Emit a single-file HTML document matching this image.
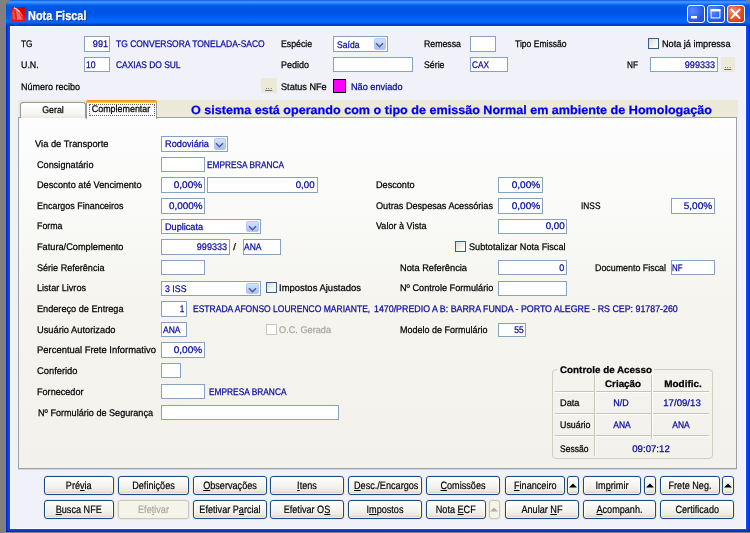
<!DOCTYPE html>
<html lang="pt-BR"><head><meta charset="utf-8"><title>Nota Fiscal</title>
<style>
html,body{margin:0;padding:0}
body{width:750px;height:533px;background:#808080;position:relative;overflow:hidden;font-family:"Liberation Sans",sans-serif;font-size:9.6px;color:#000;text-rendering:geometricPrecision}
div,span,svg{position:absolute;box-sizing:border-box}
.win{left:6px;top:0;width:744px;height:532px;border-radius:7px 7px 0 0;background:linear-gradient(to bottom,rgba(0,0,0,0) 0,rgba(0,0,0,0) 529px,rgba(0,10,120,.55) 532px),linear-gradient(to right,#0020cc 0,#0a40ee 2px,#0c4cf6 4px,#0c4cf6 740px,#0a40ee 742px,#0028d0 744px)}
.tb{left:6px;top:0;width:744px;height:26px;border-radius:7px 7px 0 0;
 background:linear-gradient(to bottom,#0650dc 0,#2b82ff 1px,#4a9aff 2px,#2c86ff 3.2px,#0a68f8 4.6px,#0059e8 6px,#0055e2 9px,#0056e6 14px,#005cf2 17px,#0468fe 20px,#0364f4 22.5px,#004cd8 24px,#003cc0 25.3px,#0038b8 26px)}
.client{left:10px;top:26px;width:736.4px;height:502.5px;background:#f1f2f9;border:1px solid #fff}
.t{white-space:nowrap;line-height:14px;height:14px;-webkit-text-stroke:0.25px currentColor}
.l{color:#000}
.v{color:#0808a0}
.b{font-weight:bold;font-size:9.6px}
.ttl{font-weight:bold;font-size:12.8px;color:#fff;text-shadow:1px 1px 0 #0a2a8a}
.msg{font-weight:bold;font-size:12px;color:#0000f0}
.cap{top:5px;width:17.5px;height:17.5px;border:1px solid #fff;border-radius:3px;background:radial-gradient(circle at 30% 30%,#5a8cfc 0%,#2c5eea 55%,#1c48d2 100%)}
.cap svg{left:-1px;top:-1px}
.cap.close{background:radial-gradient(circle at 30% 30%,#f09070 0%,#e04e26 55%,#c03814 100%)}
.in{background:#fff;border:1px solid #86a2c0}
.dd{right:1px;top:1px;bottom:1px;width:12.5px;border-radius:2px;background:linear-gradient(to bottom,#d6e0fd 0%,#c0d1fb 50%,#a8bdf3 100%);border:1px solid #b5c7f4}
.ch{left:0.8px;top:2.6px}
.cb{border:1px solid #33608c;background:linear-gradient(135deg,#dcdcd7 0%,#f3f3ef 60%,#fff 100%)}
.cb.dis{border-color:#cac8bb;background:#fff}
.dots{background:#ece9d8}
.dots span{color:#6a6a6a;left:0;right:0;bottom:3px;text-align:center;line-height:8px;font-size:8.5px;letter-spacing:0px;text-decoration:underline}
.mag{background:#ff00ff;border:1px solid #000}
.tabbg{background:#ece9d8}
.page{background:linear-gradient(to bottom,#fdfdfe 0%,#fafaf8 25%,#f5f4ef 55%,#f2f1eb 100%);border:1px solid #99a2a5;box-shadow:0 1px 0 rgba(150,158,160,.35)}
.tab{border:1px solid #919b9c;border-bottom:none;border-radius:3px 3px 0 0;background:linear-gradient(to bottom,#fff 0%,#f7f6f2 70%,#eceade 100%)}
.tab.selt{background:#fcfcfe;height:19px !important}
.or{left:-1px;right:-1px;top:-1px;height:3px;border-radius:3px 3px 0 0;background:linear-gradient(to bottom,#e68b2c,#ffc73c)}
.focus{border:1px dotted #666}
.gb{border:1px solid #d0d0bf;border-radius:4px}
.gbt{background:#f4f3ee}
.hl{border-top:1px solid #c5c5b8;border-bottom:1px solid #fff}
.vl{border-left:1px solid #c5c5b8;border-right:1px solid #fff}
.bt{border:1px solid #1a4a80;border-radius:3px;background:linear-gradient(to bottom,#fff 0%,#f6f5f0 45%,#eceae1 80%,#d6d0c5 100%);box-shadow:inset 0 0 0 1px rgba(255,255,255,.6),0 0 0 1px rgba(236,232,212,.85)}
.bt.dis{border-color:#c9c7ba;background:#f5f4ea;box-shadow:0 0 0 1px rgba(236,232,212,.85)}
.bl{-webkit-text-stroke:0.2px currentColor;left:0;right:0;top:50%;margin-top:-6.8px;line-height:14px;height:14px;text-align:center;white-space:nowrap;font-size:10.6px;transform:scaleX(.86);color:#000}
.bt.dis .bl{color:#aca899}
.tri{left:50%;top:50%;margin-left:-4px;margin-top:-3px}
u{text-decoration:underline}
.root{left:0;top:0;width:750px;height:533px;will-change:transform}

#t1{transform-origin:0 50%;transform:scaleX(0.8568)}
#t2{transform-origin:0 50%;transform:scaleX(0.8628)}
#t3{transform-origin:100% 50%;transform:scaleX(0.9491)}
#t4{transform-origin:0 50%;transform:scaleX(0.8845)}
#t5{transform-origin:0 50%;transform:scaleX(0.9139)}
#t6{transform-origin:0 50%;transform:scaleX(0.8972)}
#t7{transform-origin:0 50%;transform:scaleX(0.9129)}
#t8{transform-origin:0 50%;transform:scaleX(0.8915)}
#t9{transform-origin:0 50%;transform:scaleX(0.9516)}
#t10{transform-origin:0 50%;transform:scaleX(0.9225)}
#t11{transform-origin:0 50%;transform:scaleX(0.8996)}
#t12{transform-origin:0 50%;transform:scaleX(0.8766)}
#t13{transform-origin:0 50%;transform:scaleX(0.9372)}
#t14{transform-origin:0 50%;transform:scaleX(0.9149)}
#t15{transform-origin:0 50%;transform:scaleX(0.8614)}
#t16{transform-origin:0 50%;transform:scaleX(0.8596)}
#t17{transform-origin:100% 50%;transform:scaleX(0.9433)}
#t18{transform-origin:0 50%;transform:scaleX(0.9377)}
#t19{transform-origin:0 50%;transform:scaleX(0.9521)}
#t20{transform-origin:0 50%;transform:scaleX(0.9559)}
#t21{transform:translateX(-50%) scaleX(0.9161)}
#t22{transform:translateX(-50%) scaleX(0.9297)}
#t23{transform-origin:0 50%;transform:scaleX(1.0487)}
#t24{transform-origin:0 50%;transform:scaleX(0.9727)}
#t25{transform-origin:0 50%;transform:scaleX(0.9591)}
#t26{transform-origin:0 50%;transform:scaleX(0.9543)}
#t27{transform-origin:0 50%;transform:scaleX(0.8647)}
#t28{transform-origin:0 50%;transform:scaleX(0.9557)}
#t29{transform-origin:100% 50%;transform:scaleX(1.0477)}
#t30{transform-origin:100% 50%;transform:scaleX(1.0167)}
#t31{transform-origin:0 50%;transform:scaleX(0.9499)}
#t32{transform-origin:100% 50%;transform:scaleX(1.0477)}
#t33{transform-origin:0 50%;transform:scaleX(0.9321)}
#t34{transform-origin:100% 50%;transform:scaleX(1.0293)}
#t35{transform-origin:0 50%;transform:scaleX(0.9498)}
#t36{transform-origin:100% 50%;transform:scaleX(1.0477)}
#t37{transform-origin:0 50%;transform:scaleX(0.8703)}
#t38{transform-origin:100% 50%;transform:scaleX(1.0477)}
#t39{transform-origin:0 50%;transform:scaleX(0.9200)}
#t40{transform-origin:0 50%;transform:scaleX(0.9500)}
#t41{transform-origin:0 50%;transform:scaleX(0.9436)}
#t42{transform-origin:100% 50%;transform:scaleX(1.0167)}
#t43{transform-origin:0 50%;transform:scaleX(0.9598)}
#t44{transform-origin:100% 50%;transform:scaleX(0.9433)}
#t46{transform-origin:0 50%;transform:scaleX(0.8868)}
#t47{transform-origin:0 50%;transform:scaleX(0.9525)}
#t48{transform-origin:0 50%;transform:scaleX(0.9445)}
#t49{transform-origin:0 50%;transform:scaleX(0.9664)}
#t50{transform-origin:100% 50%;transform:scaleX(0.9357)}
#t51{transform-origin:0 50%;transform:scaleX(0.9247)}
#t52{transform-origin:0 50%;transform:scaleX(0.8205)}
#t53{transform-origin:0 50%;transform:scaleX(0.9474)}
#t54{transform-origin:0 50%;transform:scaleX(0.9161)}
#t55{transform-origin:0 50%;transform:scaleX(0.9855)}
#t56{transform-origin:0 50%;transform:scaleX(0.9533)}
#t57{transform-origin:0 50%;transform:scaleX(0.9538)}
#t58{transform-origin:100% 50%;transform:scaleX(0.8608)}
#t59{transform-origin:0 50%;transform:scaleX(0.8888)}
#t60{transform-origin:0 50%;transform:scaleX(0.9214)}
#t61{transform-origin:0 50%;transform:scaleX(0.9684)}
#t62{transform-origin:0 50%;transform:scaleX(0.8868)}
#t63{transform-origin:0 50%;transform:scaleX(0.9560)}
#t64{transform-origin:0 50%;transform:scaleX(0.9376)}
#t65{transform-origin:100% 50%;transform:scaleX(0.8902)}
#t66{transform-origin:0 50%;transform:scaleX(0.9831)}
#t67{transform-origin:100% 50%;transform:scaleX(1.0477)}
#t68{transform-origin:0 50%;transform:scaleX(0.9733)}
#t69{transform-origin:0 50%;transform:scaleX(0.9478)}
#t70{transform-origin:0 50%;transform:scaleX(0.8703)}
#t71{transform-origin:0 50%;transform:scaleX(0.9476)}
#t72{transform-origin:0 50%;transform:scaleX(1.0251)}
#t73{transform:translateX(-50%) scaleX(1.0226)}
#t74{transform:translateX(-50%) scaleX(1.0345)}
#t75{transform-origin:0 50%;transform:scaleX(0.9622)}
#t76{transform-origin:0 50%;transform:scaleX(0.9225)}
#t77{transform-origin:0 50%;transform:scaleX(0.8906)}
#t78{transform:translateX(-50%) scaleX(0.9376)}
#t79{transform:translateX(-50%) scaleX(1.0038)}
#t80{transform:translateX(-50%) scaleX(0.8868)}
#t81{transform:translateX(-50%) scaleX(0.8868)}
#t82{transform:translateX(-50%) scaleX(1.0038)}
</style></head>
<body>
<div class="root">
<div class="win"></div>
<div class="client"></div>
<div class="tb"></div>
<svg class="ico" style="left:11px;top:7px" width="14" height="14" viewBox="0 0 14 14">
<defs><linearGradient id="ig" x1="1" y1="0" x2="0" y2="1"><stop offset="0" stop-color="#c40000"/><stop offset="0.5" stop-color="#e40808"/><stop offset="1" stop-color="#ff1c1c"/></linearGradient></defs>
<rect width="14" height="14" fill="url(#ig)"/>
<path d="M2.6 0.4 C6 0.6 11 6 13.6 11.4 L13.6 14 L0.6 14 C0.3 8 1 3 2.6 0.4 Z" fill="#f02626"/>
<path d="M4.6 2.6 C7 4 10 9 11.4 13 L5.6 13 C5.6 9 5.2 5.5 4.6 2.6 Z" fill="#f76e6e"/>
<path d="M1.6 4.5 C1.4 8 1.8 11 2.6 12.6 L4.6 12.6 C4.2 9 3.6 6 3 3.4 Z" fill="#f64c4c"/>
<path d="M3 0.9 C5.4 1.6 7.2 3 8.6 4.6" stroke="#fff" stroke-width="1.3" fill="none" opacity=".9"/>
<path d="M4.8 2.2 C7.4 3.6 9.6 6 11.2 8.6" stroke="#ffe0e0" stroke-width=".8" fill="none" opacity=".85"/>
<path d="M4.4 4.6 C5 7 5.3 10 5.4 12.6" stroke="#c81414" stroke-width=".8" fill="none"/>
<rect x="0" y="12.7" width="14" height="1.3" fill="#ff0c0c" opacity=".85"/>
</svg>
<span id="t1" class="t ttl" style="left:28.40px;top:9.10px">Nota Fiscal</span>
<div class="cap" style="left:687px"><svg width="17" height="17" viewBox="0 0 17 17"><rect x="4" y="11" width="6" height="2.5" fill="#fff"/></svg></div>
<div class="cap" style="left:707px"><svg width="17" height="17" viewBox="0 0 17 17"><rect x="4.1" y="4.9" width="8.8" height="8" fill="none" stroke="#fff" stroke-width="1"/><rect x="3.6" y="4" width="9.8" height="2.4" fill="#fff"/></svg></div>
<div class="cap close" style="left:727px"><svg width="17" height="17" viewBox="0 0 17 17"><path d="M3.8 4 L13.2 13.6 M13.2 4 L3.8 13.6" stroke="#fff" stroke-width="2" stroke-linecap="butt"/></svg></div>
<span id="t2" class="t l" style="left:21.00px;top:38.10px">TG</span>
<div class="in" style="left:84px;top:36px;width:26px;height:16px;"></div>
<span id="t3" class="t v" style="right:642.30px;top:38.10px;color:#0808a0">991</span>
<span id="t4" class="t v" style="left:115.50px;top:38.10px;color:#0808a0">TG CONVERSORA TONELADA-SACO</span>
<span id="t5" class="t l" style="left:280.50px;top:38.10px">Espécie</span>
<div class="in" style="left:332.5px;top:36.4px;width:55.5px;height:15.2px;"><div class="dd"><svg class="ch" viewBox="0 0 9 7" width="9" height="7"><path d="M1 1.2 L4.5 4.8 L8 1.2" fill="none" stroke="#4a5d8c" stroke-width="1.45"/></svg></div></div>
<span id="t6" class="t v" style="left:336.70px;top:38.80px;color:#0808a0">Saída</span>
<span id="t7" class="t l" style="left:423.50px;top:38.10px">Remessa</span>
<div class="in" style="left:470px;top:36px;width:25.5px;height:16px;"></div>
<span id="t8" class="t l" style="left:515.00px;top:38.10px">Tipo Emissão</span>
<div class="cb" style="left:648px;top:38px;width:11px;height:11px;"></div>
<span id="t9" class="t l" style="left:661.50px;top:38.10px">Nota já impressa</span>
<span id="t10" class="t l" style="left:21.00px;top:58.60px">U.N.</span>
<div class="in" style="left:84px;top:57px;width:26px;height:15px;"></div>
<span id="t11" class="t v" style="left:86.20px;top:58.60px;color:#0808a0">10</span>
<span id="t12" class="t v" style="left:115.50px;top:58.60px;color:#0808a0">CAXIAS DO SUL</span>
<span id="t13" class="t l" style="left:280.50px;top:58.60px">Pedido</span>
<div class="in" style="left:332.5px;top:57px;width:80.5px;height:15px;"></div>
<span id="t14" class="t l" style="left:423.50px;top:58.60px">Série</span>
<div class="in" style="left:470px;top:57px;width:37.5px;height:15px;"></div>
<span id="t15" class="t v" style="left:471.50px;top:58.60px;color:#0808a0">CAX</span>
<span id="t16" class="t l" style="left:627.00px;top:58.60px">NF</span>
<div class="in" style="left:649.5px;top:57px;width:68px;height:15px;"></div>
<span id="t17" class="t v" style="right:34.70px;top:58.60px;color:#0808a0">999333</span>
<div class="dots" style="left:721px;top:57px;width:13.5px;height:15px;"><span>...</span></div>
<span id="t18" class="t l" style="left:21.00px;top:81.10px">Número recibo</span>
<div class="dots" style="left:260.5px;top:77.5px;width:16.5px;height:15px;"><span>...</span></div>
<span id="t19" class="t l" style="left:280.50px;top:81.10px">Status NFe</span>
<div class="mag" style="left:333px;top:79px;width:12.5px;height:13.5px;"></div>
<span id="t20" class="t v" style="left:350.50px;top:81.10px;color:#0808a0">Não enviado</span>
<div class="tabbg" style="left:18px;top:100px;width:720px;height:18px;"></div>
<div class="page" style="left:18px;top:117px;width:719px;height:352px;"></div>
<div class="tab" style="left:20px;top:102px;width:66px;height:16px;"></div>
<span id="t21" class="t l" style="left:53.20px;top:103.90px">Geral</span>
<div class="tab selt" style="left:86px;top:100px;width:71px;height:18px;"><div class="or"></div></div>
<div class="focus" style="left:88.5px;top:103.5px;width:66px;height:12.5px;"></div>
<span id="t22" class="t l" style="left:120.70px;top:103.00px">Complementar</span>
<span id="t23" class="t msg" style="left:191.00px;top:103.30px">O sistema está operando com o tipo de emissão Normal em ambiente de Homologação</span>
<span id="t24" class="t l" style="left:34.50px;top:137.85px">Via de Transporte</span>
<div class="in" style="left:161px;top:136px;width:67px;height:16px;"><div class="dd"><svg class="ch" viewBox="0 0 9 7" width="9" height="7"><path d="M1 1.2 L4.5 4.8 L8 1.2" fill="none" stroke="#4a5d8c" stroke-width="1.45"/></svg></div></div>
<span id="t25" class="t v" style="left:164.50px;top:138.35px;color:#0808a0">Rodoviária</span>
<span id="t26" class="t l" style="left:36.50px;top:158.60px">Consignatário</span>
<div class="in" style="left:161px;top:157px;width:44px;height:15px;"></div>
<span id="t27" class="t v" style="left:207.00px;top:158.60px;color:#0808a0">EMPRESA BRANCA</span>
<span id="t28" class="t l" style="left:36.50px;top:179.10px">Desconto até Vencimento</span>
<div class="in" style="left:161px;top:177px;width:44px;height:16px;"></div>
<span id="t29" class="t v" style="right:547.50px;top:179.10px;color:#0808a0">0,00%</span>
<div class="in" style="left:207px;top:177px;width:110.5px;height:16px;"></div>
<span id="t30" class="t v" style="right:435.00px;top:179.10px;color:#0808a0">0,00</span>
<span id="t31" class="t l" style="left:375.50px;top:179.10px">Desconto</span>
<div class="in" style="left:498px;top:177px;width:45px;height:16px;"></div>
<span id="t32" class="t v" style="right:209.50px;top:179.10px;color:#0808a0">0,00%</span>
<span id="t33" class="t l" style="left:36.50px;top:199.85px">Encargos Financeiros</span>
<div class="in" style="left:161px;top:198px;width:44px;height:16px;"></div>
<span id="t34" class="t v" style="right:547.50px;top:199.85px;color:#0808a0">0,000%</span>
<span id="t35" class="t l" style="left:375.50px;top:199.85px">Outras Despesas Acessórias</span>
<div class="in" style="left:498px;top:198px;width:45px;height:16px;"></div>
<span id="t36" class="t v" style="right:209.50px;top:199.85px;color:#0808a0">0,00%</span>
<span id="t37" class="t l" style="left:581.00px;top:199.85px">INSS</span>
<div class="in" style="left:670.5px;top:198px;width:44.5px;height:16px;"></div>
<span id="t38" class="t v" style="right:37.50px;top:199.85px;color:#0808a0">5,00%</span>
<span id="t39" class="t l" style="left:36.50px;top:220.10px">Forma</span>
<div class="in" style="left:161px;top:219px;width:99.5px;height:15px;"><div class="dd"><svg class="ch" viewBox="0 0 9 7" width="9" height="7"><path d="M1 1.2 L4.5 4.8 L8 1.2" fill="none" stroke="#4a5d8c" stroke-width="1.45"/></svg></div></div>
<span id="t40" class="t v" style="left:164.50px;top:220.80px;color:#0808a0">Duplicata</span>
<span id="t41" class="t l" style="left:375.50px;top:220.10px">Valor à Vista</span>
<div class="in" style="left:498px;top:219px;width:69px;height:15px;"></div>
<span id="t42" class="t v" style="right:185.50px;top:220.10px;color:#0808a0">0,00</span>
<span id="t43" class="t l" style="left:36.50px;top:241.10px">Fatura/Complemento</span>
<div class="in" style="left:161px;top:239px;width:68.5px;height:16px;"></div>
<span id="t44" class="t v" style="right:523.00px;top:241.10px;color:#0808a0">999333</span>
<span id="t45" class="t l" style="left:233.30px;top:241.10px">/</span>
<div class="in" style="left:242.5px;top:239px;width:38px;height:16px;"></div>
<span id="t46" class="t v" style="left:244.00px;top:241.10px;color:#0808a0">ANA</span>
<div class="cb" style="left:455px;top:241px;width:11px;height:11px;"></div>
<span id="t47" class="t l" style="left:468.50px;top:241.10px">Subtotalizar Nota Fiscal</span>
<span id="t48" class="t l" style="left:36.50px;top:261.60px">Série Referência</span>
<div class="in" style="left:161px;top:260px;width:44px;height:15px;"></div>
<span id="t49" class="t l" style="left:399.70px;top:261.60px">Nota Referência</span>
<div class="in" style="left:498px;top:260px;width:69px;height:15px;"></div>
<span id="t50" class="t v" style="right:185.50px;top:261.60px;color:#0808a0">0</span>
<span id="t51" class="t l" style="left:595.00px;top:261.60px">Documento Fiscal</span>
<div class="in" style="left:670.5px;top:260px;width:44.5px;height:15px;"></div>
<span id="t52" class="t v" style="left:672.00px;top:261.60px;color:#0808a0">NF</span>
<span id="t53" class="t l" style="left:36.50px;top:282.35px">Listar Livros</span>
<div class="in" style="left:161px;top:281px;width:99.5px;height:15px;"><div class="dd"><svg class="ch" viewBox="0 0 9 7" width="9" height="7"><path d="M1 1.2 L4.5 4.8 L8 1.2" fill="none" stroke="#4a5d8c" stroke-width="1.45"/></svg></div></div>
<span id="t54" class="t v" style="left:164.50px;top:283.05px;color:#0808a0">3 ISS</span>
<div class="cb" style="left:265.5px;top:282px;width:11px;height:11px;"></div>
<span id="t55" class="t l" style="left:279.00px;top:282.35px">Impostos Ajustados</span>
<span id="t56" class="t l" style="left:399.70px;top:282.35px">Nº Controle Formulário</span>
<div class="in" style="left:498px;top:281px;width:69px;height:14.5px;"></div>
<span id="t57" class="t l" style="left:36.50px;top:302.85px">Endereço de Entrega</span>
<div class="in" style="left:161px;top:301px;width:26px;height:16px;"></div>
<span id="t58" class="t v" style="right:565.50px;top:302.85px;color:#0808a0">1</span>
<span id="t59" class="t v" style="left:192.50px;top:302.65px;color:#0808a0">ESTRADA AFONSO LOURENCO MARIANTE,</span>
<span id="t60" class="t v" style="left:374.20px;top:302.65px;color:#0808a0">1470/PREDIO A B: BARRA FUNDA - PORTO ALEGRE - RS CEP: 91787-260</span>
<span id="t61" class="t l" style="left:36.50px;top:323.60px">Usuário Autorizado</span>
<div class="in" style="left:161px;top:322px;width:26px;height:15px;"></div>
<span id="t62" class="t v" style="left:162.50px;top:323.60px;color:#0808a0">ANA</span>
<div class="cb dis" style="left:265.7px;top:324px;width:11px;height:11px;"></div>
<span id="t63" class="t l" style="left:279.00px;top:323.60px;color:#aca899">O.C. Gerada</span>
<span id="t64" class="t l" style="left:399.70px;top:323.60px">Modelo de Formulário</span>
<div class="in" style="left:498px;top:322.5px;width:28px;height:14.5px;"></div>
<span id="t65" class="t v" style="right:226.50px;top:323.60px;color:#0808a0">55</span>
<span id="t66" class="t l" style="left:36.50px;top:344.10px">Percentual Frete Informativo</span>
<div class="in" style="left:161px;top:342px;width:44px;height:16px;"></div>
<span id="t67" class="t v" style="right:547.50px;top:344.10px;color:#0808a0">0,00%</span>
<span id="t68" class="t l" style="left:36.50px;top:365.10px">Conferido</span>
<div class="in" style="left:161px;top:363px;width:19.5px;height:15px;"></div>
<span id="t69" class="t l" style="left:36.50px;top:385.85px">Fornecedor</span>
<div class="in" style="left:161px;top:384px;width:44px;height:15px;"></div>
<span id="t70" class="t v" style="left:209.30px;top:385.85px;color:#0808a0">EMPRESA BRANCA</span>
<span id="t71" class="t l" style="left:37.50px;top:406.60px">Nº Formulário de Segurança</span>
<div class="in" style="left:161px;top:405px;width:178px;height:15px;"></div>
<div class="gb" style="left:552px;top:369px;width:161px;height:90px;"></div>
<div class="gbt" style="left:557px;top:363px;width:97px;height:12px"></div>
<span id="t72" class="t b" style="left:559.80px;top:363.50px">Controle de Acesso</span>
<div class="hl" style="left:555px;top:391px;width:153.5px;height:2px;"></div>
<div class="hl" style="left:555px;top:413px;width:153.5px;height:2px;"></div>
<div class="hl" style="left:555px;top:435px;width:153.5px;height:2px;"></div>
<div class="vl" style="left:594px;top:375px;width:2px;height:81px;"></div>
<div class="vl" style="left:651px;top:375px;width:2px;height:63.5px;"></div>
<span id="t73" class="t b" style="left:622.80px;top:377.50px">Criação</span>
<span id="t74" class="t b" style="left:682.60px;top:377.50px">Modific.</span>
<span id="t75" class="t l" style="left:559.50px;top:396.50px">Data</span>
<span id="t76" class="t l" style="left:559.50px;top:418.80px">Usuário</span>
<span id="t77" class="t l" style="left:559.50px;top:442.80px">Sessão</span>
<span id="t78" class="t v" style="left:621.00px;top:396.50px;color:#0808a0">N/D</span>
<span id="t79" class="t v" style="left:681.90px;top:396.50px;color:#0808a0">17/09/13</span>
<span id="t80" class="t v" style="left:621.70px;top:418.80px;color:#0808a0">ANA</span>
<span id="t81" class="t v" style="left:681.00px;top:418.80px;color:#0808a0">ANA</span>
<span id="t82" class="t v" style="left:650.70px;top:442.80px;color:#0808a0">09:07:12</span>
<div class="bt" style="left:44px;top:476px;width:69.5px;height:19px"><span id="t83" class="bl">Pré<u>v</u>ia</span></div>
<div class="bt" style="left:118px;top:476px;width:71px;height:19px"><span id="t84" class="bl">Definições</span></div>
<div class="bt" style="left:192.5px;top:476px;width:74px;height:19px"><span id="t85" class="bl"><u>O</u>bservações</span></div>
<div class="bt" style="left:270px;top:476px;width:74px;height:19px"><span id="t86" class="bl"><u>I</u>tens</span></div>
<div class="bt" style="left:348px;top:476px;width:74px;height:19px"><span id="t87" class="bl"><u>D</u>esc./Encargos</span></div>
<div class="bt" style="left:426px;top:476px;width:74px;height:19px"><span id="t88" class="bl"><u>C</u>omissões</span></div>
<div class="bt" style="left:504.5px;top:476px;width:60.5px;height:19px"><span id="t89" class="bl"><u>F</u>inanceiro</span></div>
<div class="bt" style="left:567px;top:476px;width:11.5px;height:19px"><svg viewBox="0 0 8 5" width="8" height="5" class="tri"><path d="M0 4.5 L4 0.5 L8 4.5 Z" fill="#000"/></svg></div>
<div class="bt" style="left:582.5px;top:476px;width:58px;height:19px"><span id="t90" class="bl">Im<u>p</u>rimir</span></div>
<div class="bt" style="left:643.5px;top:476px;width:12px;height:19px"><svg viewBox="0 0 8 5" width="8" height="5" class="tri"><path d="M0 4.5 L4 0.5 L8 4.5 Z" fill="#000"/></svg></div>
<div class="bt" style="left:659.5px;top:476px;width:60px;height:19px"><span id="t91" class="bl">Frete Ne<u>g</u>.</span></div>
<div class="bt" style="left:722px;top:476px;width:12px;height:19px"><svg viewBox="0 0 8 5" width="8" height="5" class="tri"><path d="M0 4.5 L4 0.5 L8 4.5 Z" fill="#000"/></svg></div>
<div class="bt" style="left:44px;top:500px;width:69.5px;height:19px"><span id="t92" class="bl"><u>B</u>usca NFE</span></div>
<div class="bt dis" style="left:118px;top:500px;width:71px;height:19px"><span id="t93" class="bl">Efe<u>t</u>ivar</span></div>
<div class="bt" style="left:192.5px;top:500px;width:74px;height:19px"><span id="t94" class="bl">Efetivar P<u>a</u>rcial</span></div>
<div class="bt" style="left:270px;top:500px;width:74px;height:19px"><span id="t95" class="bl">Efetivar O<u>S</u></span></div>
<div class="bt" style="left:348px;top:500px;width:74px;height:19px"><span id="t96" class="bl">I<u>m</u>postos</span></div>
<div class="bt" style="left:426px;top:500px;width:59.5px;height:19px"><span id="t97" class="bl">Nota <u>E</u>CF</span></div>
<div class="bt dis" style="left:488.5px;top:500px;width:11.5px;height:19px"><svg viewBox="0 0 8 5" width="8" height="5" class="tri"><path d="M0 4.5 L4 0.5 L8 4.5 Z" fill="#b0ad9f"/></svg></div>
<div class="bt" style="left:504.5px;top:500px;width:74px;height:19px"><span id="t98" class="bl">Anular <u>N</u>F</span></div>
<div class="bt" style="left:582.5px;top:500px;width:73px;height:19px"><span id="t99" class="bl"><u>A</u>companh.</span></div>
<div class="bt" style="left:659.5px;top:500px;width:74.5px;height:19px"><span id="t100" class="bl">Certificado</span></div>
</div>
</body></html>
